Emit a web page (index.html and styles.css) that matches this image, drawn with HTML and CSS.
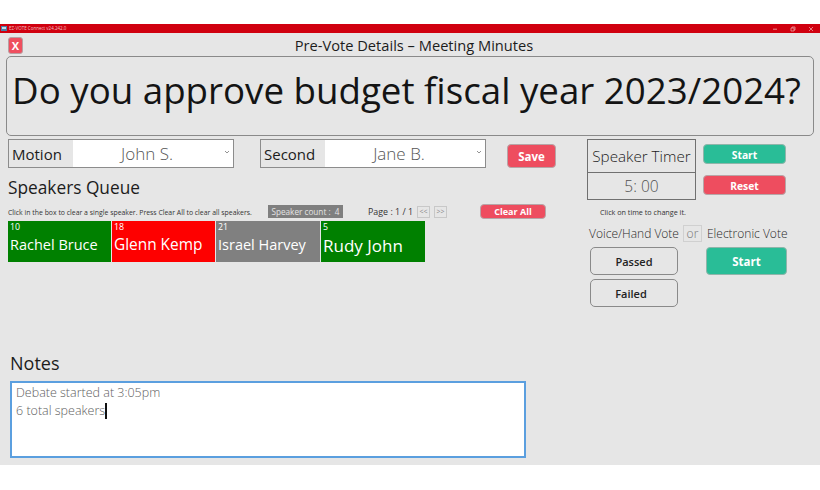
FILE: index.html
```html
<!DOCTYPE html>
<html lang="en">
<head>
<meta charset="utf-8">
<title>EZ-VOTE Connect</title>
<link rel="stylesheet" href="styles.css">
</head>
<body>
<main class="window">
  <header class="titlebar">
    <div class="app-name">
      <svg class="app-icon" viewBox="0 0 6 5"><rect width="6" height="5" fill="#4a7fa8"/><rect x="1" y="1" width="4" height="2" fill="#c7d9e6"/></svg>
      <span>EZ-VOTE Connect v24.242.0</span>
    </div>
    <div class="win-controls">
      <svg viewBox="0 0 6 6"><path d="M1 3.2H5" stroke="#f0b0b0" stroke-width=".8"/></svg>
      <svg viewBox="0 0 6 6"><path d="M1 2H4V5H1ZM2 2V1H5V4H4" fill="none" stroke="#f0b0b0" stroke-width=".7"/></svg>
      <svg viewBox="0 0 6 6"><path d="M1 1L5 5M5 1L1 5" stroke="#f0b0b0" stroke-width=".7"/></svg>
    </div>
  </header>

  <div class="page-head">
    <button class="btn-close">X</button>
    <h1 class="page-title">Pre-Vote Details – Meeting Minutes</h1>
  </div>

  <section class="question">Do you approve budget fiscal year 2023/2024?</section>

  <div class="columns">
    <div class="left">
      <div class="motion-row">
        <div class="field field-motion">
          <span class="field-label">Motion</span>
          <span class="field-value">John S.<svg class="chev" viewBox="0 0 6 4"><path d="M1 1L3 3L5 1" fill="none" stroke="#777" stroke-width=".8"/></svg></span>
        </div>
        <div class="field field-second">
          <span class="field-label">Second</span>
          <span class="field-value">Jane B.<svg class="chev" viewBox="0 0 6 4"><path d="M1 1L3 3L5 1" fill="none" stroke="#777" stroke-width=".8"/></svg></span>
        </div>
        <button class="btn btn-red btn-save">Save</button>
      </div>

      <h2 class="queue-title">Speakers Queue</h2>

      <div class="queue-bar">
        <span class="hint hint-queue">Click in the box to clear a single speaker. Press Clear All to clear all speakers.</span>
        <span class="count">Speaker count :&nbsp; 4</span>
        <span class="pager">Page : 1 / 1</span>
        <span class="page-btn">&lt;&lt;</span>
        <span class="page-btn">&gt;&gt;</span>
        <button class="btn btn-red btn-clear">Clear All</button>
      </div>

      <div class="tiles">
        <div class="tile tile-green"><span class="tile-num">10</span><span class="tile-name">Rachel Bruce</span></div>
        <div class="tile tile-red"><span class="tile-num">18</span><span class="tile-name tile-name-md">Glenn Kemp</span></div>
        <div class="tile tile-gray tile-wide"><span class="tile-num">21</span><span class="tile-name">Israel Harvey</span></div>
        <div class="tile tile-green tile-wide"><span class="tile-num">5</span><span class="tile-name tile-name-lg">Rudy John</span></div>
      </div>

      <h2 class="notes-title">Notes</h2>
      <div class="notes">
        <div>Debate started at 3:05pm</div>
        <div>6 total speakers<span class="caret"></span></div>
      </div>
    </div>

    <aside class="right">
      <div class="timer-row">
        <div class="timer">
          <div class="timer-label">Speaker Timer</div>
          <div class="timer-value">5: 00</div>
        </div>
        <div class="timer-actions">
          <button class="btn btn-green btn-timer">Start</button>
          <button class="btn btn-red btn-timer">Reset</button>
        </div>
      </div>
      <div class="hint hint-time">Click on time to change it.</div>
      <div class="vote-head">
        <span>Voice/Hand Vote</span>
        <span class="or">or</span>
        <span>Electronic Vote</span>
      </div>
      <div class="vote-actions">
        <div class="vote-manual">
          <button class="btn btn-outline">Passed</button>
          <button class="btn btn-outline btn-failed">Failed</button>
        </div>
        <button class="btn btn-green btn-estart">Start</button>
      </div>
    </aside>
  </div>
</main>
</body>
</html>
```

FILE: styles.css
```css
* { box-sizing: border-box; }
html, body { margin: 0; padding: 0; background: #fff; }
body { font-family: "Open Sans", "Noto Sans", sans-serif; color: #1c1c1c; width: 820px; height: 490px; overflow: hidden; }
button { font-family: inherit; padding: 0; cursor: pointer; }
h1, h2 { margin: 0; font-weight: 400; }

.window { margin-top: 24px; height: 441px; background: #e6e6e6; }

.titlebar { height: 9px; background: #d0000f; display: flex; justify-content: space-between; align-items: center; }
.app-name { display: flex; align-items: center; gap: 2px; padding-left: 1px; color: #f3c4c4; font-size: 4.5px; line-height: 9px; white-space: nowrap; }
.app-icon { width: 6px; height: 5px; }
.win-controls { display: flex; gap: 12px; padding-right: 6px; }
.win-controls svg { width: 6px; height: 6px; }

.page-head { height: 23px; position: relative; }
.btn-close { position: absolute; left: 8px; top: 4px; width: 15px; height: 17px; background: #ef4f5f; border: 1px solid #b9a0a3; border-radius: 3px; color: #fff; font-size: 11px; font-weight: 700; line-height: 14px; }
.page-title { font-size: 14.65px; line-height: 24px; height: 23px; text-align: center; padding-left: 8px; }

.question { margin: 0 6px; height: 80px; border: 1px solid #8a8a8a; border-radius: 5px; padding-right: 7px; font-size: 36.7px; line-height: 66px; text-align: center; white-space: nowrap; color: #141414; }

.columns { display: grid; grid-template-columns: 587px 233px; }
.left { padding: 3px 0 0 8px; }
.right { padding-top: 3px; }

.motion-row { display: flex; align-items: flex-start; }
.field { display: flex; height: 29px; border: 1px solid #8c8c8c; background: #e6e6e6; }
.field-motion { width: 226px; }
.field-second { width: 226px; margin-left: 26px; }
.field-label { width: 64px; font-size: 15px; line-height: 29px; padding-left: 3px; }
.field-value { flex: 1; background: #fff; position: relative; color: #565656; font-size: 17px; font-weight: 300; line-height: 28px; text-align: center; padding-right: 12px; }
.chev { position: absolute; right: 3px; top: 10px; width: 6px; height: 4px; }

.btn { border-radius: 4px; color: #fff; font-weight: 700; border: 1px solid #b7a5a7; }
.btn-red { background: #ee4d5f; }
.btn-green { background: #29bd97; border-color: #8fb5aa; }
.btn-save { width: 49px; height: 24px; margin: 5px 0 0 21px; font-size: 11.5px; }

.queue-title { font-size: 17.3px; line-height: 24px; margin-top: 8px; }

.queue-bar { display: flex; align-items: center; height: 17px; margin-top: 3px; }
.hint { font-size: 6.9px; color: #333; white-space: nowrap; }
.hint-queue { width: 260px; margin-top: 2px; }
.count { width: 75px; height: 13px; background: #7f7f7f; color: #e4e4e4; font-size: 8.2px; line-height: 13px; text-align: center; white-space: nowrap; }
.pager { margin-left: 25px; width: 49px; font-size: 8.9px; color: #333; white-space: nowrap; }
.page-btn { width: 13px; height: 12px; margin-right: 4px; border: 1px solid #c8c8c8; color: #888; font-size: 7px; line-height: 10px; text-align: center; }
.btn-clear { width: 66px; height: 15px; margin-left: 29px; font-size: 9px; line-height: 12px; }

.tiles { display: flex; gap: 1px; margin-top: 1px; }
.tile { width: 103px; height: 41px; color: #fff; padding: 1px 2px; display: flex; flex-direction: column; }
.tile-wide { width: 104px; }
.tile-green { background: #008000; }
.tile-red { background: #fe0000; }
.tile-gray { background: #808080; }
.tile-num { font-size: 8.8px; line-height: 10px; }
.tile-name { font-size: 14.5px; line-height: 24px; white-space: nowrap; margin-top: 1px; }
.tile-name-md { font-size: 15.4px; }
.tile-name-lg { font-size: 17px; margin-top: 2px; }

.notes-title { font-size: 18px; line-height: 24px; margin: 89px 0 0 2px; }
.notes { width: 516px; height: 77px; margin: 6px 0 0 2px; background: #fff; border: 2px solid #5b9fdf; padding: 1px 4px; color: #5e5e5e; font-size: 12.5px; line-height: 18px; font-weight: 300; }
.caret { display: inline-block; width: 2px; height: 16px; background: #111; vertical-align: -4px; }

.timer-row { display: flex; gap: 7px; }
.timer { width: 109px; height: 61px; border: 1px solid #707070; }
.timer-label { height: 33px; border-bottom: 1px solid #707070; font-size: 15.2px; font-weight: 300; line-height: 33px; text-align: center; color: #1c1c1c; white-space: nowrap; }
.timer-value { font-size: 15.5px; font-weight: 300; line-height: 26px; text-align: center; color: #505050; }
.timer-actions { display: flex; flex-direction: column; gap: 11px; padding-top: 5px; }
.btn-timer { width: 83px; height: 20px; padding-top: 1px; font-size: 10.3px; }

.hint-time { margin: 8px 0 0 13px; line-height: 9px; font-size: 7.2px; }

.vote-head { display: flex; align-items: center; margin-top: 7px; padding-left: 2px; height: 19px; font-size: 12px; font-weight: 300; color: #2a2a2a; white-space: nowrap; }
.or { width: 19px; height: 17px; margin: 0 5px 0 4px; border: 1px solid #d0d0d0; line-height: 15px; text-align: center; color: #777; }

.vote-actions { display: flex; margin-top: 4px; padding-left: 3px; align-items: flex-start; }
.vote-manual { display: flex; flex-direction: column; gap: 4px; }
.btn-outline { width: 88px; height: 28px; background: #e6e6e6; color: #222; border: 1px solid #8a8a8a; border-radius: 5px; font-size: 11px; font-weight: 600; }
.btn-failed { padding-right: 6px; }
.btn-estart { width: 81px; height: 28px; margin-left: 28px; font-size: 11.5px; }
```
